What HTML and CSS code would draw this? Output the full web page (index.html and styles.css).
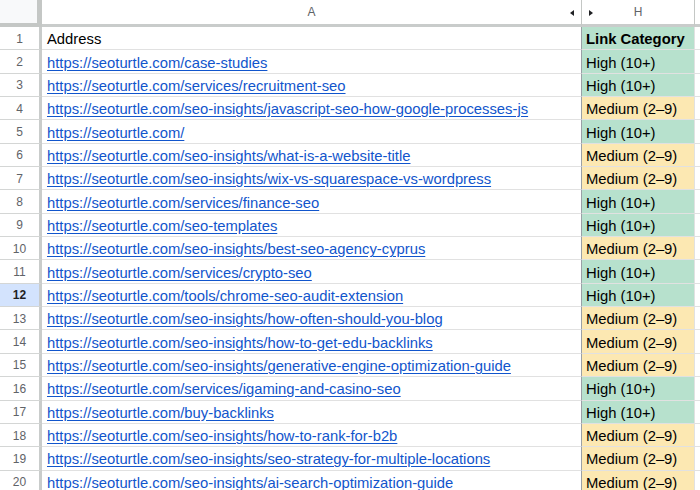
FILE: index.html
```html
<!DOCTYPE html>
<html>
<head>
<meta charset="utf-8">
<link rel="stylesheet" href="styles.css">
</head>
<body>
<div class="sheet">
  <div class="corner"></div>
  <div class="colhead colhead-a">A<span class="tri tri-left"></span></div>
  <div class="colhead colhead-h"><span class="tri tri-right"></span>H</div>
  <div class="colhead colhead-i"></div>

  <div class="rowhead">1</div><div class="cell">Address</div><div class="cell cat head green">Link Category</div><div class="cell edge"></div>
  <div class="rowhead">2</div><div class="cell"><a href="#">https://seoturtle.com/case-studies</a></div><div class="cell cat green">High (10+)</div><div class="cell edge"></div>
  <div class="rowhead">3</div><div class="cell"><a href="#">https://seoturtle.com/services/recruitment-seo</a></div><div class="cell cat green">High (10+)</div><div class="cell edge"></div>
  <div class="rowhead">4</div><div class="cell"><a href="#">https://seoturtle.com/seo-insights/javascript-seo-how-google-processes-js</a></div><div class="cell cat orange">Medium (2–9)</div><div class="cell edge"></div>
  <div class="rowhead">5</div><div class="cell"><a href="#">https://seoturtle.com/</a></div><div class="cell cat green">High (10+)</div><div class="cell edge"></div>
  <div class="rowhead">6</div><div class="cell"><a href="#">https://seoturtle.com/seo-insights/what-is-a-website-title</a></div><div class="cell cat orange">Medium (2–9)</div><div class="cell edge"></div>
  <div class="rowhead">7</div><div class="cell"><a href="#">https://seoturtle.com/seo-insights/wix-vs-squarespace-vs-wordpress</a></div><div class="cell cat orange">Medium (2–9)</div><div class="cell edge"></div>
  <div class="rowhead">8</div><div class="cell"><a href="#">https://seoturtle.com/services/finance-seo</a></div><div class="cell cat green">High (10+)</div><div class="cell edge"></div>
  <div class="rowhead">9</div><div class="cell"><a href="#">https://seoturtle.com/seo-templates</a></div><div class="cell cat green">High (10+)</div><div class="cell edge"></div>
  <div class="rowhead">10</div><div class="cell"><a href="#">https://seoturtle.com/seo-insights/best-seo-agency-cyprus</a></div><div class="cell cat orange">Medium (2–9)</div><div class="cell edge"></div>
  <div class="rowhead">11</div><div class="cell"><a href="#">https://seoturtle.com/services/crypto-seo</a></div><div class="cell cat green">High (10+)</div><div class="cell edge"></div>
  <div class="rowhead active">12</div><div class="cell"><a href="#">https://seoturtle.com/tools/chrome-seo-audit-extension</a></div><div class="cell cat green">High (10+)</div><div class="cell edge"></div>
  <div class="rowhead">13</div><div class="cell"><a href="#">https://seoturtle.com/seo-insights/how-often-should-you-blog</a></div><div class="cell cat orange">Medium (2–9)</div><div class="cell edge"></div>
  <div class="rowhead">14</div><div class="cell"><a href="#">https://seoturtle.com/seo-insights/how-to-get-edu-backlinks</a></div><div class="cell cat orange">Medium (2–9)</div><div class="cell edge"></div>
  <div class="rowhead">15</div><div class="cell"><a href="#">https://seoturtle.com/seo-insights/generative-engine-optimization-guide</a></div><div class="cell cat orange">Medium (2–9)</div><div class="cell edge"></div>
  <div class="rowhead">16</div><div class="cell"><a href="#">https://seoturtle.com/services/igaming-and-casino-seo</a></div><div class="cell cat green">High (10+)</div><div class="cell edge"></div>
  <div class="rowhead">17</div><div class="cell"><a href="#">https://seoturtle.com/buy-backlinks</a></div><div class="cell cat green">High (10+)</div><div class="cell edge"></div>
  <div class="rowhead">18</div><div class="cell"><a href="#">https://seoturtle.com/seo-insights/how-to-rank-for-b2b</a></div><div class="cell cat orange">Medium (2–9)</div><div class="cell edge"></div>
  <div class="rowhead">19</div><div class="cell"><a href="#">https://seoturtle.com/seo-insights/seo-strategy-for-multiple-locations</a></div><div class="cell cat orange">Medium (2–9)</div><div class="cell edge"></div>
  <div class="rowhead">20</div><div class="cell"><a href="#">https://seoturtle.com/seo-insights/ai-search-optimization-guide</a></div><div class="cell cat orange">Medium (2–9)</div><div class="cell edge"></div>
</div>
</body>
</html>
```
FILE: styles.css
```css
html, body {
  margin: 0;
  padding: 0;
  background: #ffffff;
  overflow: hidden;
}

.sheet {
  display: grid;
  grid-template-columns: 42px 540px 113px 5px;
  grid-template-rows: 27px repeat(20, 23.35px);
  font-family: "Liberation Sans", Arial, sans-serif;
  width: 700px;
}

.corner {
  box-sizing: border-box;
  background: #f8f9fa;
  border-right: 5px solid #c4c7c5;
  border-bottom: 4px solid #c4c7c5;
}

.colhead {
  position: relative;
  box-sizing: border-box;
  display: flex;
  align-items: center;
  justify-content: center;
  font-size: 12px;
  color: #5f6368;
  border-right: 1px solid #c4c7c5;
  border-bottom: 3px solid #c9cccb;
  background: #ffffff;
}

.colhead-i {
  border-right: none;
}

.tri {
  position: absolute;
  top: 10px;
  width: 0;
  height: 0;
  border-top: 3.5px solid transparent;
  border-bottom: 3.5px solid transparent;
}

.tri-left {
  right: 7px;
  border-right: 4px solid #202124;
}

.tri-right {
  left: 7px;
  border-left: 4px solid #202124;
}

.rowhead {
  box-sizing: border-box;
  display: flex;
  align-items: center;
  justify-content: center;
  font-size: 12px;
  color: #5f6368;
  background: #ffffff;
  border-right: 3px solid #c9cccb;
  border-bottom: 1px solid #d4d6d5;
  padding-top: 1px;
}

.rowhead.active {
  background: #d3e3fd;
  color: #1f1f1f;
  font-weight: bold;
}

.cell {
  box-sizing: border-box;
  display: flex;
  align-items: center;
  padding: 2px 0 0 5px;
  font-size: 14.8px;
  color: #000000;
  border-right: 1px solid #e1e1e1;
  border-bottom: 1px solid #e1e1e1;
  white-space: nowrap;
  overflow: hidden;
}

.cell a {
  color: #1155cc;
  text-decoration: underline;
  text-underline-offset: 2px;
}

.cat {
  padding-left: 4px;
  border-left: 1px solid #9aa0a6;
  margin-left: -1px;
}

.cat.head {
  font-weight: bold;
}

.green {
  background: #b7e1cd;
}

.orange {
  background: #fce8b2;
}

.edge {
  padding: 0;
  border-right: none;
}
```
